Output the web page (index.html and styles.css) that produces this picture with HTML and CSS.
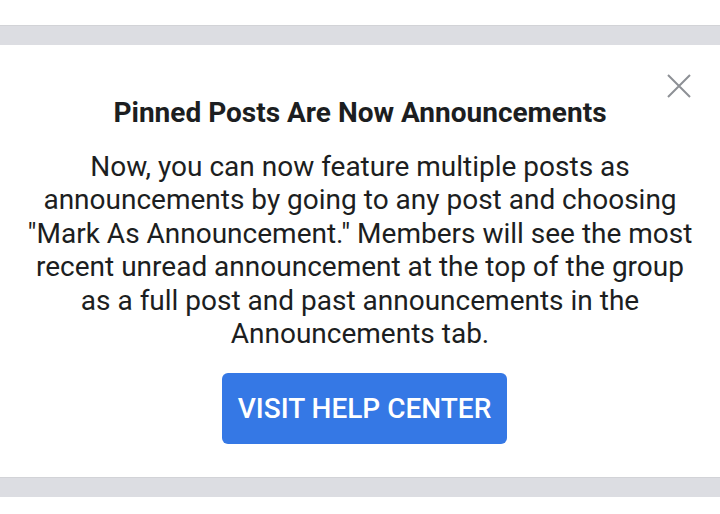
FILE: index.html
```html
<!DOCTYPE html>
<html lang="en">
<head>
    <meta charset="UTF-8">
    <meta name="viewport" content="width=device-width, initial-scale=1.0">
    <title>Pinned Posts Are Now Announcements</title>
    <link rel="stylesheet" href="styles.css">
</head>
<body>

    <div class="top-space"></div>
    <div class="divider"></div>

    <div class="notice">
        <button class="close-btn" aria-label="Close">
            <svg width="24" height="24" viewBox="0 0 24 24">
                <path d="M1 1 L23 23 M23 1 L1 23" stroke="#8d9095" stroke-width="2" fill="none"/>
            </svg>
        </button>

        <h1 class="notice-title">Pinned Posts Are Now Announcements</h1>
        <p class="notice-text">Now, you can now feature multiple posts as announcements by going to any post and choosing "Mark As Announcement." Members will see the most recent unread announcement at the top of the group as a full post and past announcements in the Announcements tab.</p>

        <a href="#" class="help-btn">VISIT HELP CENTER</a>
    </div>

    <div class="divider"></div>

</body>
</html>
```

FILE: styles.css
```css
body {
    font-family: 'Roboto', 'Liberation Sans', sans-serif;
    background-color: #ffffff;
    color: #1c1e21;
    margin: 0;
    padding: 0;
}

.top-space {
    height: 25px;
}

.divider {
    height: 19px;
    background-color: #dcdde2;
    border-top: 1px solid #d2d3d7;
}

.notice {
    position: relative;
    text-align: center;
    padding: 51px 20px 0;
    height: 381px;
}

.close-btn {
    position: absolute;
    top: 29px;
    right: 29px;
    padding: 0;
    border: none;
    background: none;
    cursor: pointer;
}

.notice-title {
    font-size: 28px;
    font-weight: 700;
    margin: 0;
    line-height: 34px;
}

.notice-text {
    font-size: 28px;
    line-height: 33.4px;
    margin: 20px 0 23px;
}

.help-btn {
    display: inline-block;
    margin-left: 9px;
    background-color: #3578e5;
    color: #ffffff;
    text-decoration: none;
    font-size: 28px;
    font-weight: 500;
    line-height: 33px;
    padding: 19px 16px;
    border-radius: 6px;
}
```
